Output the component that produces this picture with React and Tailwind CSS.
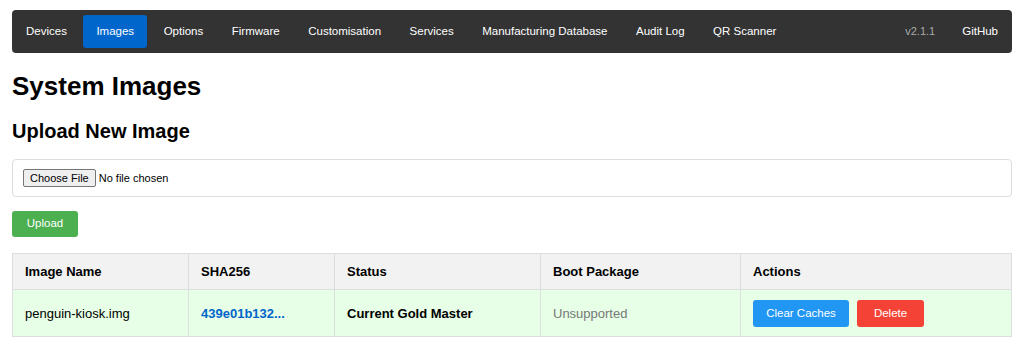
import React from "react";

const navItems = [
  "Devices",
  "Images",
  "Options",
  "Firmware",
  "Customisation",
  "Services",
  "Manufacturing Database",
  "Audit Log",
  "QR Scanner",
];

function NavBar() {
  return (
    <nav className="flex items-center justify-between bg-[#333333] rounded-[4px] py-[5px] pl-[2px] pr-[2px]">
      <div className="flex items-center gap-[4.5px]">
        {navItems.map((item) => (
          <a
            key={item}
            className={
              "px-[12px] py-[9px] rounded-[3px] text-[11.5px] leading-[15px] text-white " +
              (item === "Images" ? "bg-[#0066cc] px-[13px]" : "")
            }
          >
            {item}
          </a>
        ))}
      </div>
      <div className="flex items-center gap-[3px]">
        <span className="px-[12px] text-[11px] text-[#aaaaaa]">v2.1.1</span>
        <a className="px-[12px] py-[9px] text-[11.5px] leading-[15px] text-white">GitHub</a>
      </div>
    </nav>
  );
}

function UploadForm() {
  return (
    <>
      <div className="mt-[16px] border border-[#dddddd] rounded-[4px] bg-white px-[10px] py-[9px] flex items-center">
        <button className="h-[18px] px-[6px] bg-[#efefef] border border-[#767676] rounded-[2px] text-[11px] leading-[14px] text-black">
          Choose File
        </button>
        <span className="ml-[3px] text-[11px] text-black">No file chosen</span>
      </div>
      <button className="mt-[14px] bg-[#4caf50] text-white text-[11.5px] rounded-[3px] w-[66px] h-[26px]">
        Upload
      </button>
    </>
  );
}

function ImageTable() {
  const th = "text-left font-bold text-[13px] px-[12px] py-[10px] border border-[#dddddd] leading-[15px]";
  const td = "text-[13px] px-[12px] pt-[10px] pb-[9px] border border-[#dddddd]";
  return (
    <table className="mt-[16px] w-full border-collapse">
      <thead>
        <tr className="bg-[#f2f2f2]">
          <th className={th + " w-[176px]"}>Image Name</th>
          <th className={th + " w-[146px]"}>SHA256</th>
          <th className={th + " w-[206px]"}>Status</th>
          <th className={th + " w-[200px]"}>Boot Package</th>
          <th className={th}>Actions</th>
        </tr>
      </thead>
      <tbody>
        <tr className="bg-[#e6ffe6]">
          <td className={td}>penguin-kiosk.img</td>
          <td className={td}>
            <a className="font-bold text-[#0066cc]">439e01b132...</a>
          </td>
          <td className={td + " font-bold"}>Current Gold Master</td>
          <td className={td + " text-[#777777]"}>Unsupported</td>
          <td className={td}>
            <div className="flex gap-[8px]">
              <button className="bg-[#2196f3] text-white text-[11.5px] rounded-[3px] w-[96px] h-[27px]">
                Clear Caches
              </button>
              <button className="bg-[#f44336] text-white text-[11.5px] rounded-[3px] w-[67px] h-[27px]">
                Delete
              </button>
            </div>
          </td>
        </tr>
      </tbody>
    </table>
  );
}

export default function App() {
  return (
    <div
      className="bg-white text-black px-[12px] pt-[10px] min-h-[357px]"
      style={{ fontFamily: '"Liberation Sans", Arial, sans-serif' }}
    >
      <NavBar />
      <h1 className="mt-[18px] text-[26px] font-bold leading-[30px]">System Images</h1>
      <h2 className="mt-[18px] text-[20px] font-bold leading-[24px]">Upload New Image</h2>
      <UploadForm />
      <ImageTable />
    </div>
  );
}
